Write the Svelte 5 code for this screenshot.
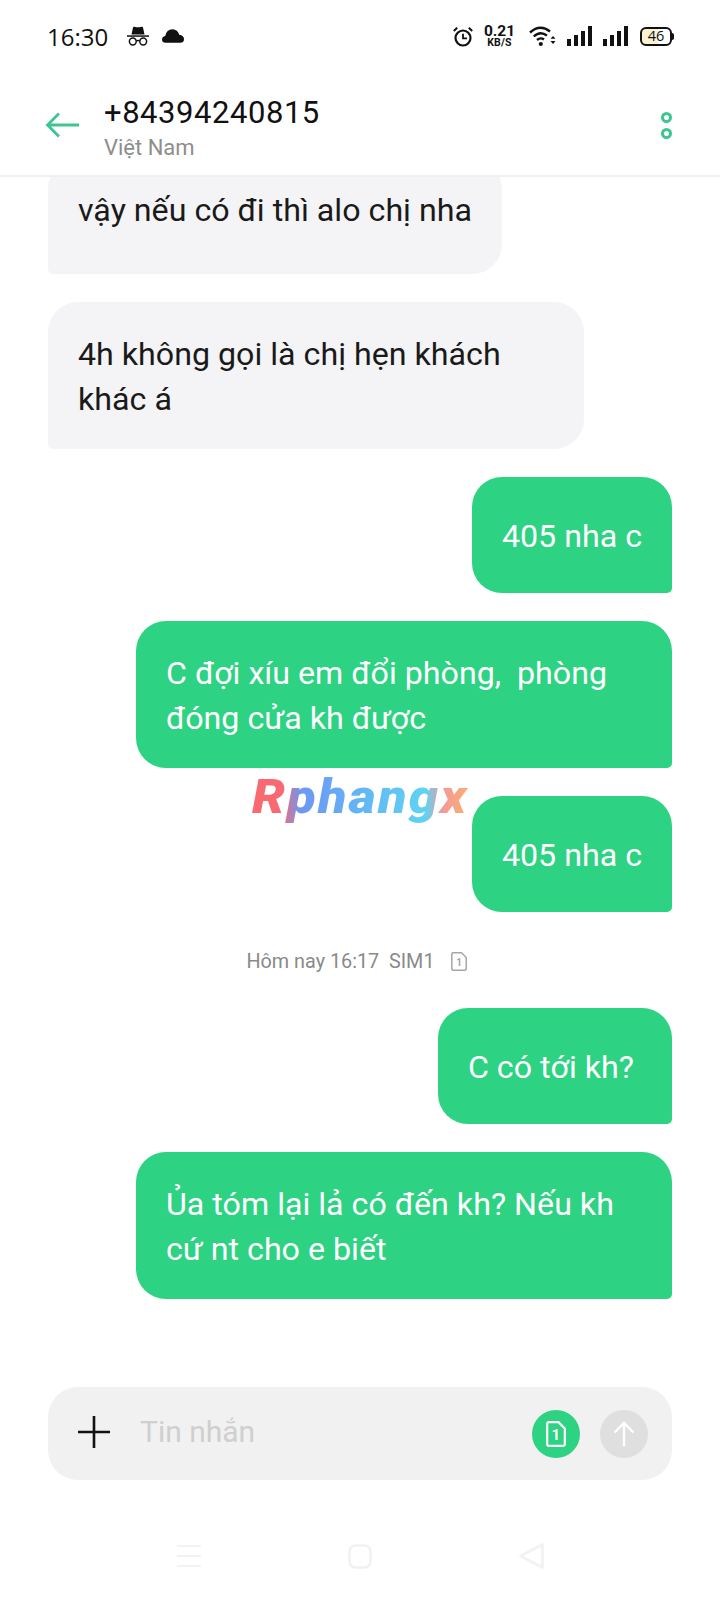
<script>
  const messages = [
    { id: 1, text: 'vậy nếu có đi thì alo chị nha', mine: false, cut: true },
    { id: 2, text: '4h không gọi là chị hẹn khách khác á', mine: false },
    { id: 3, text: '405 nha c', mine: true },
    { id: 4, text: 'C đợi xíu em đổi phòng,  phòng đóng cửa kh được', mine: true },
    { id: 5, text: '405 nha c', mine: true },
    { id: 6, stamp: 'Hôm nay 16:17  SIM1' },
    { id: 7, text: 'C có tới kh? ', mine: true },
    { id: 8, text: 'Ủa tóm lại lả có đến kh? Nếu kh cứ nt cho e biết', mine: true }
  ];
</script>

<div class="phone">
  <div class="status">
    <div class="status-left">
      <span class="clock">16:30</span>
      <svg width="22" height="20" viewBox="0 0 22 20" class="spy">
        <path d="M4.500 8.500 L6 1.500 Q6.300 0.500 7.500 0.800 Q11 1.800 14.500 0.800 Q15.700 0.500 16 1.500 L17.500 8.500 Z" fill="#111" />
        <rect x="0" y="9.300" width="22" height="1.500" fill="#111" />
        <circle cx="5.800" cy="15.500" r="3.400" fill="none" stroke="#111" stroke-width="1.500" />
        <circle cx="16.200" cy="15.500" r="3.400" fill="none" stroke="#111" stroke-width="1.500" />
        <path d="M9 15 Q11 14 13 15" fill="none" stroke="#111" stroke-width="1.300" />
      </svg>
      <svg width="22" height="14" viewBox="0 0 22 14" class="cloud">
        <path d="M3.800 13.800 Q0 13.800 0 10.500 Q0 7.500 3.200 7 Q4.500 0.500 10.500 0.300 Q15.800 0.500 17.200 5.800 Q22 6.400 22 10.200 Q22 13.800 18 13.800 Z" fill="#111" />
      </svg>
    </div>
    <div class="status-right">
      <svg width="20" height="21" viewBox="0 0 20 21" class="alarm">
        <circle cx="10" cy="12" r="7.500" fill="none" stroke="#111" stroke-width="2.200" />
        <path d="M10 7.800 V12.300 H14" fill="none" stroke="#111" stroke-width="1.800" />
        <path d="M0.800 5 L4.200 1.800 M19.200 5 L15.800 1.800" stroke="#111" stroke-width="2" />
      </svg>
      <div class="speed"><b>0.21</b><small>KB/S</small></div>
      <svg width="27" height="22" viewBox="0 0 27 22" class="wifi">
        <path d="M1 7.500 Q11 -1.500 21 6.500" fill="none" stroke="#111" stroke-width="2.400" />
        <path d="M4.800 11.500 Q11 5.500 18 10.500" fill="none" stroke="#111" stroke-width="2.400" />
        <path d="M8 15 Q11.500 12 15 14.500" fill="none" stroke="#111" stroke-width="2.400" />
        <circle cx="11.800" cy="19" r="2.100" fill="#111" />
        <path d="M21.500 13.800 L24 11 L26.500 13.800 Z M21.500 16 L24 19 L26.500 16 Z" fill="#111" />
      </svg>
      <svg width="25" height="20" viewBox="0 0 25 20" class="bars">
        <rect x="0" y="13" width="4" height="7" /><rect x="7" y="9" width="4" height="11" /><rect x="14" y="5" width="4" height="15" /><rect x="21" y="0" width="4" height="20" />
      </svg>
      <svg width="25" height="20" viewBox="0 0 25 20" class="bars">
        <rect x="0" y="13" width="4" height="7" /><rect x="7" y="9" width="4" height="11" /><rect x="14" y="5" width="4" height="15" /><rect x="21" y="0" width="4" height="20" />
      </svg>
      <div class="battery"><span>46</span></div>
    </div>
  </div>

  <header class="top">
    <svg width="36" height="28" viewBox="0 0 36 28" class="back">
      <path d="M34 14 H3 M14 2.500 L2.500 14 L14 25.500" fill="none" stroke="#3fc592" stroke-width="2.800" />
    </svg>
    <div class="who">
      <div class="number">+84394240815</div>
      <div class="country">Việt Nam</div>
    </div>
    <div class="more"><i></i><i></i></div>
  </header>

  <main class="thread">
    {#each messages as m (m.id)}
      {#if m.stamp}
        <div class="stamp">
          <span>{m.stamp}</span>
          <svg width="16" height="19" viewBox="0 0 16 19">
            <path d="M2 0.800 H10.500 L15.200 5.500 V17 Q15.200 18.200 14 18.200 H2 Q0.800 18.200 0.800 17 V2 Q0.800 0.800 2 0.800 Z" fill="none" stroke="#a6a6a6" stroke-width="1.500" />
            <text x="8" y="14" class="sim-no">1</text>
          </svg>
        </div>
      {:else}
        <div class="bubble" class:mine={m.mine} class:cut={m.cut}>{m.text}</div>
      {/if}
    {/each}
    <div class="mark">Rphangx</div>
  </main>

  <div class="composer">
    <svg width="32" height="32" viewBox="0 0 32 32" class="plus">
      <path d="M16 0 V32 M0 16 H32" stroke="#111" stroke-width="2.600" />
    </svg>
    <span class="hint">Tin nhắn</span>
    <div class="round sim">
      <svg width="20" height="26" viewBox="0 0 20 26">
        <path d="M2.800 1.200 H12.500 L18.800 7.500 V23 Q18.800 24.800 17 24.800 H2.800 Q1.200 24.800 1.200 23 V3 Q1.200 1.200 2.800 1.200 Z" fill="none" stroke="#fff" stroke-width="2.200" />
        <text x="9.800" y="19" class="sim-big">1</text>
      </svg>
    </div>
    <div class="round send">
      <svg width="22" height="25" viewBox="0 0 22 25">
        <path d="M11 25 V2 M1.500 11.500 L11 2 L20.500 11.500" fill="none" stroke="#fff" stroke-width="2.400" />
      </svg>
    </div>
  </div>

  <nav class="softkeys">
    <svg width="24" height="22" viewBox="0 0 24 22"><path d="M0 1 H24 M0 11 H24 M0 21 H24" stroke="#f2f2f2" stroke-width="2" /></svg>
    <svg width="24" height="25" viewBox="0 0 24 25"><rect x="1.500" y="1.500" width="21" height="22" rx="6" fill="none" stroke="#f2f2f2" stroke-width="2.600" /></svg>
    <svg width="25" height="26" viewBox="0 0 25 26"><path d="M23.500 1.500 V24.500 L1.500 13 Z" fill="none" stroke="#f2f2f2" stroke-width="2.600" stroke-linejoin="round" /></svg>
  </nav>
</div>

<style>
  :global(body) {
    background: #fff;
  }

  .phone {
    width: 720px;
    height: 1600px;
    display: flex;
    flex-direction: column;
    overflow: hidden;
    background: #fff;
    font-family: Roboto, "Noto Sans", sans-serif;
    color: #111;
  }

  .status {
    height: 72px;
    flex: none;
    display: flex;
    align-items: center;
    justify-content: space-between;
    padding: 0 46px 0 47px;
    box-sizing: border-box;
  }

  .status-left,
  .status-right {
    display: flex;
    align-items: center;
  }

  .clock {
    font-size: 24px;
    font-family: "Open Sans", Roboto, sans-serif;
    width: 60px;
    white-space: nowrap;
  }

  .spy {
    margin-left: 20px;
  }

  .cloud {
    margin-left: 13px;
    margin-bottom: 1px;
  }

  .speed {
    display: flex;
    flex-direction: column;
    align-items: center;
    width: 31px;
    margin-left: 11px;
    font-family: Roboto, sans-serif;
  }

  .speed b {
    font-size: 15.500px;
    line-height: 13px;
    font-weight: 700;
  }

  .speed small {
    font-size: 10.500px;
    line-height: 10px;
    font-weight: 700;
    letter-spacing: 0.2px;
  }

  .wifi {
    margin-left: 14px;
  }

  .bars {
    fill: #111;
    margin-left: 11px;
  }

  .battery {
    width: 32px;
    height: 19px;
    box-sizing: border-box;
    border: 2px solid #111;
    border-radius: 6px;
    margin: 0 2px 0 12px;
    background: linear-gradient(90deg, #fdf1d4 0 56%, #fff 56%);
    display: flex;
    align-items: center;
    justify-content: center;
    position: relative;
  }

  .battery::after {
    content: "";
    position: absolute;
    right: -4px;
    top: 4px;
    width: 2px;
    height: 7px;
    background: #111;
    border-radius: 0 2px 2px 0;
  }

  .battery span {
    font-size: 14.500px;
    line-height: 1;
    font-family: "Open Sans", Roboto, sans-serif;
  }

  .top {
    height: 105px;
    flex: none;
    display: flex;
    align-items: center;
    border-bottom: 2px solid #efefef;
    box-sizing: border-box;
    padding: 0 48px 0 45px;
  }

  .back {
    margin-top: 3px;
  }

  .who {
    margin-left: 23px;
    flex: 1;
    margin-top: 10px;
  }

  .number {
    font-size: 31px;
    line-height: 38px;
    letter-spacing: 0.55px;
  }

  .country {
    font-size: 22px;
    line-height: 32px;
    color: #8d8d8d;
  }

  .more {
    display: flex;
    flex-direction: column;
    gap: 5px;
    margin-top: 3px;
  }

  .more i {
    display: block;
    width: 11px;
    height: 11px;
    box-sizing: border-box;
    border: 3px solid #3fc592;
    border-radius: 50%;
  }

  .thread {
    position: relative;
    flex: 1;
    min-height: 0;
    overflow: hidden;
    display: flex;
    flex-direction: column;
    justify-content: flex-end;
    gap: 28px;
    padding: 0 48px 88px;
  }

  .bubble {
    flex: none;
    align-self: flex-start;
    box-sizing: border-box;
    max-width: 536px;
    min-height: 116px;
    padding: 29.500px 30px 27.500px;
    font-size: 32.200px;
    line-height: 45px;
    color: #1a1a1a;
    background: #f4f4f6;
    border-radius: 30px 30px 30px 5px;
    white-space: pre-wrap;
    display: flex;
    align-items: center;
  }

  .bubble.cut {
    padding-bottom: 41px;
    min-height: 0;
  }

  .bubble.mine {
    align-self: flex-end;
    background: #2dd282;
    color: #fff;
    border-radius: 30px 30px 5px 30px;
  }

  .stamp {
    flex: none;
    height: 40px;
    box-sizing: border-box;
    display: flex;
    align-items: center;
    justify-content: center;
    gap: 16px;
    padding: 3px 7px 0 0;
    font-size: 19.800px;
    color: #8a8a8a;
    white-space: pre;
  }

  .sim-no {
    font: 700 10px Roboto, sans-serif;
    text-anchor: middle;
    fill: #a6a6a6;
  }

  .sim-big {
    font: 700 15px Roboto, sans-serif;
    text-anchor: middle;
    fill: #fff;
  }

  .mark {
    position: absolute;
    left: 252px;
    top: 593px;
    font: italic 900 48px Roboto, sans-serif;
    letter-spacing: 2px;
    line-height: 54px;
    color: transparent;
    background: linear-gradient(90deg, #f86a72 0 14%, #6f96f2 22%, #63b6f4 50%, #5fd3f3 80%, #f39a98 88%, #f8b070 100%);
    -webkit-background-clip: text;
    background-clip: text;
    transform: scaleX(1.09);
    transform-origin: left center;
  }

  .composer {
    flex: none;
    height: 93px;
    margin: 0 48px;
    border-radius: 30px;
    background: #f1f1f1;
    display: flex;
    align-items: center;
    padding: 0 24px 0 30px;
  }

  .plus {
    flex: none;
    margin-top: -3px;
  }

  .hint {
    flex: 1;
    margin-left: 30px;
    font-size: 30px;
    color: #cfcfcf;
    margin-top: -4px;
  }

  .round {
    width: 48px;
    height: 48px;
    border-radius: 50%;
    display: flex;
    align-items: center;
    justify-content: center;
  }

  .sim {
    background: #2dd282;
    margin-right: 20px;
  }

  .send {
    background: #dfdfdf;
  }

  .softkeys {
    flex: none;
    height: 120px;
    box-sizing: border-box;
    display: flex;
    align-items: center;
    justify-content: center;
    gap: 147px;
    padding-top: 32px;
  }
</style>
